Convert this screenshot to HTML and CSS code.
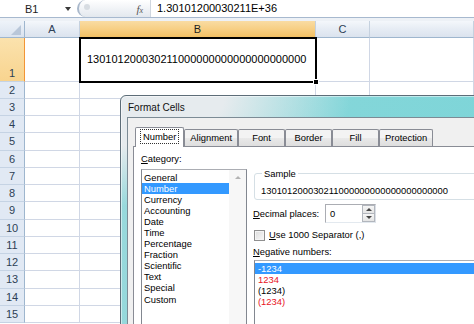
FILE: index.html
```html
<!DOCTYPE html>
<html lang="en">
<head>
  <meta charset="UTF-8">
  <meta name="viewport" content="width=device-width, initial-scale=1.0">
  <title>Format Cells</title>
  <link rel="stylesheet" href="styles.css">
</head>
<body>
  <div class="formula-bar">
    <div class="name-box">B1<span class="name-arrow"></span></div>
    <div class="fx-box"><span class="fx-knob"></span><span class="fx">f<span class="fx-sub">x</span></span></div>
    <div class="formula">1.30101200030211E+36</div>
  </div>

  <div class="sheet">
    <div class="corner"><span class="corner-tri"></span></div>
    <div class="ch">A</div>
    <div class="ch sel">B</div>
    <div class="ch">C</div>
    <div class="ch"></div>

    <div class="rh sel tall">1</div>
    <div class="c"></div>
    <div class="c active">130101200030211000000000000000000000</div>
    <div class="c"></div>
    <div class="c"></div>

    <div class="rh">2</div><div class="c"></div><div class="c"></div><div class="c"></div><div class="c"></div>
    <div class="rh">3</div><div class="c"></div><div class="c"></div><div class="c"></div><div class="c"></div>
    <div class="rh">4</div><div class="c"></div><div class="c"></div><div class="c"></div><div class="c"></div>
    <div class="rh">5</div><div class="c"></div><div class="c"></div><div class="c"></div><div class="c"></div>
    <div class="rh">6</div><div class="c"></div><div class="c"></div><div class="c"></div><div class="c"></div>
    <div class="rh">7</div><div class="c"></div><div class="c"></div><div class="c"></div><div class="c"></div>
    <div class="rh">8</div><div class="c"></div><div class="c"></div><div class="c"></div><div class="c"></div>
    <div class="rh">9</div><div class="c"></div><div class="c"></div><div class="c"></div><div class="c"></div>
    <div class="rh">10</div><div class="c"></div><div class="c"></div><div class="c"></div><div class="c"></div>
    <div class="rh">11</div><div class="c"></div><div class="c"></div><div class="c"></div><div class="c"></div>
    <div class="rh">12</div><div class="c"></div><div class="c"></div><div class="c"></div><div class="c"></div>
    <div class="rh">13</div><div class="c"></div><div class="c"></div><div class="c"></div><div class="c"></div>
    <div class="rh">14</div><div class="c"></div><div class="c"></div><div class="c"></div><div class="c"></div>
    <div class="rh">15</div><div class="c"></div><div class="c"></div><div class="c"></div><div class="c"></div>
  </div>

  <!-- Format Cells dialog floats over the sheet -->
  <div class="dialog">
    <div class="title">Format Cells</div>
    <div class="client">
      <div class="tabs">
        <div class="tab on"><span class="focus">Number</span></div>
        <div class="tab">Alignment</div>
        <div class="tab">Font</div>
        <div class="tab">Border</div>
        <div class="tab">Fill</div>
        <div class="tab">Protection</div>
      </div>
      <div class="panel">
        <div class="left">
          <div class="lbl"><u>C</u>ategory:</div>
          <div class="listbox cat">
            <div class="items">
              <div class="item">General</div>
              <div class="item hl">Number</div>
              <div class="item">Currency</div>
              <div class="item">Accounting</div>
              <div class="item">Date</div>
              <div class="item">Time</div>
              <div class="item">Percentage</div>
              <div class="item">Fraction</div>
              <div class="item">Scientific</div>
              <div class="item">Text</div>
              <div class="item">Special</div>
              <div class="item">Custom</div>
            </div>
            <div class="vscroll"><span class="up-arrow"></span></div>
          </div>
        </div>
        <div class="right">
          <fieldset class="sample">
            <legend>Sample</legend>
            <div class="sample-val">130101200030211000000000000000000000</div>
          </fieldset>
          <div class="dec-row">
            <div class="dec-lbl"><u>D</u>ecimal places:</div>
            <div class="spin">
              <span class="spin-val">0</span>
              <div class="spin-btns">
                <span class="spin-btn"><span class="tri-up"></span></span>
                <span class="spin-btn"><span class="tri-down"></span></span>
              </div>
            </div>
          </div>
          <div class="chk-row"><span class="checkbox"></span><span><u>U</u>se 1000 Separator (,)</span></div>
          <div class="lbl neg-lbl"><u>N</u>egative numbers:</div>
          <div class="listbox neg">
            <div class="item hl">-1234</div>
            <div class="item red">1234</div>
            <div class="item">(1234)</div>
            <div class="item red">(1234)</div>
          </div>
        </div>
      </div>
    </div>
  </div>
</body>
</html>
```

FILE: styles.css
```css
body {
  margin: 0;
  width: 474px;
  height: 324px;
  overflow: hidden;
  position: relative;
  background: #fff;
  font-family: "Liberation Sans", Arial, sans-serif;
  font-size: 11px;
  color: #000;
}

/* formula bar */
.formula-bar {
  display: flex;
  align-items: center;
  height: 17px;
  border-bottom: 1px solid #a7b9cf;
}
.name-box {
  width: 77px;
  box-sizing: border-box;
  padding-left: 25px;
  display: flex;
  align-items: center;
  color: #1e1e1e;
}
.name-arrow {
  margin-left: auto;
  margin-right: 6px;
  border-top: 4px solid #3a3a3a;
  border-left: 3px solid transparent;
  border-right: 3px solid transparent;
}
.fx-box {
  width: 73px;
  height: 17px;
  box-sizing: border-box;
  border-left: 2px solid #a9b8cb;
  border-radius: 9px 0 0 9px;
  background: linear-gradient(#ffffff, #eef1f5 60%, #e3e8ee);
  display: flex;
  align-items: center;
}
.fx-knob {
  width: 6px;
  height: 6px;
  margin-left: 5px;
  margin-top: -4px;
  border-radius: 50%;
  background: #d7dce2;
}
.fx {
  margin-left: auto;
  margin-right: 7px;
  font-family: "Liberation Serif", serif;
  font-style: italic;
  font-size: 11px;
  color: #555;
}
.fx-sub {
  font-size: 8px;
}
.formula {
  height: 17px;
  line-height: 17px;
  padding-left: 6px;
  border-left: 1px solid #cfd6df;
}

/* sheet grid */
.sheet {
  border-top: 3px solid #edf1f6;
  display: grid;
  grid-template-columns: 25px 55px 236px 54px 104px;
  grid-template-rows: 17px 43.5px repeat(14, 17.25px);
}
.corner {
  background: linear-gradient(#eef3f9, #dae3ef);
  border-right: 1px solid #9eb6ce;
  border-bottom: 1px solid #9eb6ce;
  position: relative;
}
.corner-tri {
  position: absolute;
  right: 3px;
  bottom: 2px;
  border-bottom: 10px solid #b9c7d9;
  border-left: 10px solid transparent;
}
.ch {
  background: linear-gradient(#f4f7fb, #e6ecf4 50%, #dbe3ee);
  border-right: 1px solid #c5d1df;
  border-bottom: 1px solid #9eb6ce;
  text-align: center;
  line-height: 16px;
  color: #2d3f55;
}
.ch.sel {
  background: linear-gradient(#f9dca3, #f7cf84 50%, #f2c064);
  border-bottom-color: #f29536;
  color: #1d1d1d;
}
.rh {
  background: #e1e9f4;
  border-right: 1px solid #9eb6ce;
  border-bottom: 1px solid #c5d3e4;
  display: flex;
  align-items: center;
  justify-content: center;
  color: #2d3f55;
}
.rh.sel {
  background: linear-gradient(#fbe2ad, #f8d48f);
  border-right-color: #f29536;
}
.rh.tall {
  align-items: flex-end;
  padding-bottom: 2px;
}
.c {
  border-right: 1px solid #d0d7e5;
  border-bottom: 1px solid #d0d7e5;
}
.c.active {
  position: relative;
  z-index: 1;
  outline: 2px solid #000;
  outline-offset: -1px;
  display: flex;
  align-items: center;
  padding-left: 7px;
  white-space: nowrap;
}
.c.active::after {
  content: "";
  position: absolute;
  right: -4px;
  bottom: -4px;
  width: 4px;
  height: 4px;
  background: #000;
  border: 1px solid #fff;
}

/* dialog window */
.dialog {
  position: absolute;
  left: 120px;
  top: 95px;
  width: 380px;
  height: 260px;
  box-sizing: border-box;
  border: 1px solid #5d6d78;
  border-radius: 6px 6px 0 0;
  padding-left: 6px;
  background:
    radial-gradient(ellipse 230px 110px at 0 0, rgba(230, 235, 238, 1) 45%, rgba(230, 235, 238, 0) 100%),
    linear-gradient(100deg, #9ad9dc 0%, #84d6d9 50%, #7cd5d8 100%);
  box-shadow: inset 0 0 0 1px rgba(255, 255, 255, 0.5);
  z-index: 5;
  font-family: "Liberation Sans", Arial, sans-serif;
  font-size: 9.4px;
}
.title {
  height: 21px;
  line-height: 23px;
  padding-left: 1px;
  font-size: 10px;
  color: #111;
}
.client {
  background: #f0f0f0;
  border: 1px solid #7c8b95;
  height: 100%;
  padding-left: 5px;
}
.tabs {
  display: flex;
  align-items: flex-end;
  height: 28px;
  padding-left: 2px;
}
.tab {
  height: 17px;
  box-sizing: border-box;
  min-width: 47px;
  padding: 0 5px;
  border: 1px solid #898c95;
  border-bottom: none;
  border-radius: 2px 2px 0 0;
  background: linear-gradient(#f3f3f3 50%, #e9e9e9 50%, #dedede);
  text-align: center;
  line-height: 16px;
}
.tab.on {
  height: 20px;
  background: #fff;
  margin-bottom: -1px;
  position: relative;
  z-index: 1;
  padding-top: 1px;
}
.focus {
  outline: 1px dotted #333;
  padding: 1px 2px;
}
.panel {
  background: #fff;
  border: 1px solid #898c95;
  height: 200px;
  display: flex;
  padding-left: 7px;
}
.left {
  width: 106px;
}
.lbl {
  line-height: 11px;
}
.left .lbl {
  margin-top: 6px;
  margin-bottom: 5px;
}
.listbox {
  border: 1px solid #828790;
  border-top-color: #abadb3;
  background: #fff;
}
.cat {
  height: 180px;
  display: flex;
}
.items {
  flex: 1;
  padding-top: 1.5px;
}
.item {
  height: 11.1px;
  line-height: 11px;
  padding-left: 2px;
}
.item.hl {
  background: #3399ff;
  color: #fff;
}
.item.red {
  color: #e8121c;
}
.vscroll {
  width: 17px;
  background: #f7f7f7;
  display: flex;
  justify-content: center;
  padding-top: 6px;
  box-sizing: border-box;
}
.up-arrow {
  width: 0;
  height: 0;
  border-bottom: 3px solid #b3b3b3;
  border-left: 3px solid transparent;
  border-right: 3px solid transparent;
}
.right {
  width: 230px;
  margin-left: 6px;
}
.sample {
  margin: 21px 0 0 1px;
  padding: 6px 0 3px 6px;
  border: 1px solid #d5dfe5;
  border-radius: 3px;
}
.sample legend {
  padding: 0 2px;
  margin-left: 1px;
  line-height: 11px;
}
.sample-val {
  line-height: 11px;
}
.dec-row {
  display: flex;
  align-items: center;
  margin-top: 4px;
}
.dec-lbl {
  width: 72px;
}
.spin {
  width: 51px;
  height: 19px;
  box-sizing: border-box;
  border: 1px solid #abadb3;
  border-right-color: #dbdfe6;
  border-bottom-color: #e3e9ef;
  display: flex;
  align-items: center;
  background: #fff;
}
.spin-val {
  flex: 1;
  padding-left: 4px;
}
.spin-btns {
  width: 13px;
  height: 17px;
  display: flex;
  flex-direction: column;
}
.spin-btn {
  flex: 1;
  border: 1px solid #b2b6bd;
  background: linear-gradient(#f6f6f6, #e4e4e4);
  display: flex;
  align-items: center;
  justify-content: center;
}
.spin-btn + .spin-btn {
  border-top: none;
}
.tri-up {
  border-bottom: 3px solid #444;
  border-left: 3px solid transparent;
  border-right: 3px solid transparent;
}
.tri-down {
  border-top: 3px solid #444;
  border-left: 3px solid transparent;
  border-right: 3px solid transparent;
}
.chk-row {
  display: flex;
  align-items: center;
  margin-top: 6px;
  line-height: 12px;
}
.checkbox {
  width: 11px;
  height: 11px;
  box-sizing: border-box;
  border: 1px solid #8f8f8f;
  background: linear-gradient(135deg, #dcdcdc, #f8f8f8);
  box-shadow: inset 0 0 0 1px #f4f4f4;
  margin: 0 4px 0 1px;
}
.neg-lbl {
  margin-top: 5px;
}
.neg {
  margin-top: 3px;
  margin-left: 1px;
  height: 80px;
  padding-top: 2px;
}
.neg .item {
  padding-left: 3px;
  height: 11px;
}
```
